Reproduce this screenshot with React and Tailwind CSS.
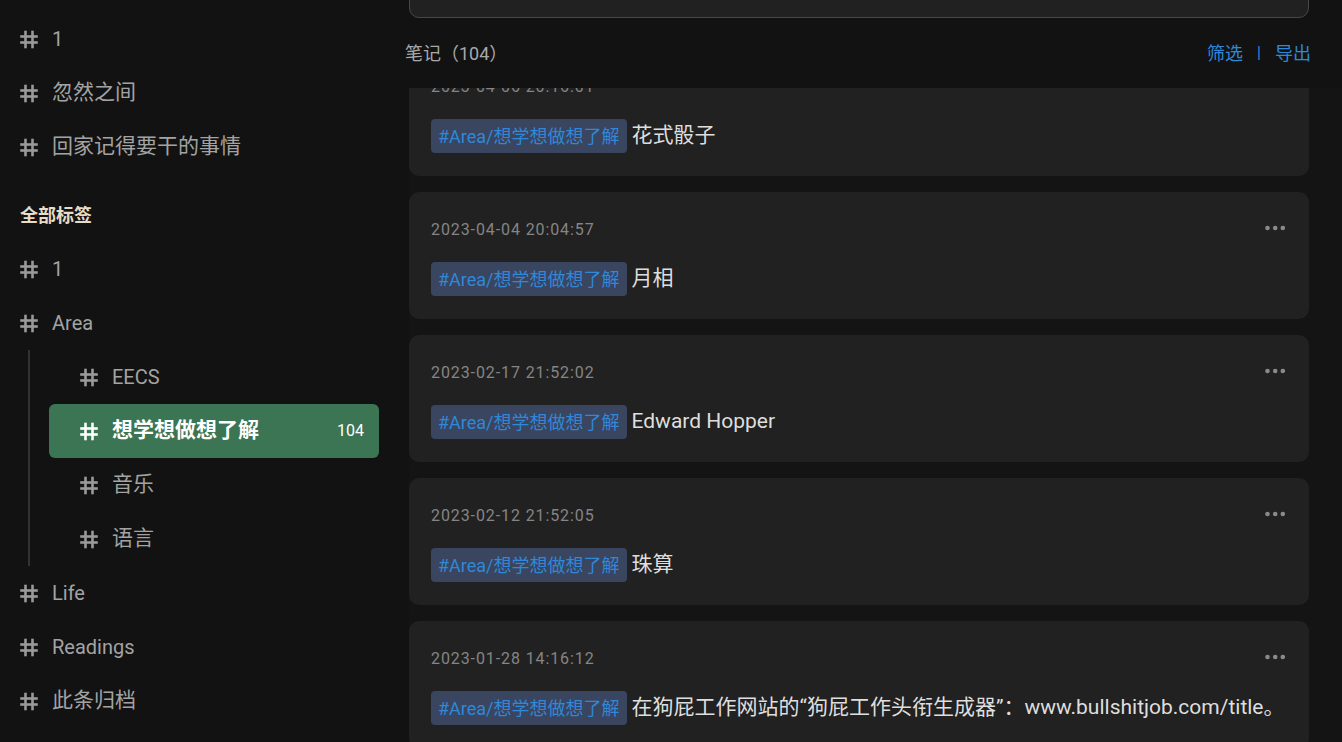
import React from 'react';

const FONT = { fontFamily: 'Roboto, "Noto Sans CJK SC", sans-serif' };

const hasCJK = (s) => /[\u4e00-\u9fff]/.test(s);

const Hash = ({ className = 'text-[#9a9a9a]' }) => (
    <svg width="18" height="19" viewBox="0 0 18 19" className={className}>
        <g stroke="currentColor" strokeWidth="2.6" strokeLinecap="square">
            <line x1="5.5" y1="2" x2="5.5" y2="17" />
            <line x1="12.5" y1="2" x2="12.5" y2="17" />
            <line x1="1.5" y1="6.5" x2="16.5" y2="6.5" />
            <line x1="1.5" y1="12.5" x2="16.5" y2="12.5" />
        </g>
    </svg>
);

const TagRow = ({ label }) => (
    <div className="flex h-[54px] items-center gap-[14px]">
        <Hash />
        <span className={`${hasCJK(label) ? 'text-[21px]' : 'text-[20px]'} text-[#a3a3a3]`}>{label}</span>
    </div>
);

const SubRow = ({ label, active, count }) => (
    <div
        className={`ml-[19px] flex h-[54px] items-center rounded-[6px] pl-[31px] pr-[15px] ${
            active ? 'bg-[#3b7553]' : ''
        }`}
    >
        <Hash className={active ? 'text-white' : 'text-[#9a9a9a]'} />
        <span
            className={`ml-[14px] flex-1 ${hasCJK(label) ? 'text-[21px]' : 'text-[20px]'} ${
                active ? 'font-bold text-white' : 'text-[#a3a3a3]'
            }`}
        >
            {label}
        </span>
        {count && <span className="text-[16px] text-white">{count}</span>}
    </div>
);

const notes = [
    { time: '2023-04-06 20:16:01', text: '花式骰子' },
    { time: '2023-04-04 20:04:57', text: '月相' },
    { time: '2023-02-17 21:52:02', text: 'Edward Hopper' },
    { time: '2023-02-12 21:52:05', text: '珠算' },
    { time: '2023-01-28 14:16:12', text: '在狗屁工作网站的“狗屁工作头衔生成器”：www.bullshitjob.com/title。' },
];

const Dots = () => (
    <svg width="20" height="6" viewBox="0 0 20 6" className="mt-[7px] text-[#8a8a8a]">
        <circle cx="2.5" cy="3" r="2.3" fill="currentColor" />
        <circle cx="10.2" cy="3" r="2.3" fill="currentColor" />
        <circle cx="17.8" cy="3" r="2.3" fill="currentColor" />
    </svg>
);

const NoteCard = ({ note, first }) => (
    <div
        className={`h-[127px] shrink-0 rounded-[10px] bg-[#212121] pl-[22px] pr-[24px] pt-[26px] ${
            first ? '-mt-[39px]' : ''
        }`}
    >
        <div className="flex h-[24px] items-start justify-between">
            <span className="text-[16px] leading-[24px] tracking-[0.9px] text-[#858585]">{note.time}</span>
            <Dots />
        </div>
        <div className="mt-[20px] flex items-center gap-[5px]">
            <span className="flex h-[34px] items-center rounded-[4px] bg-[#3a4560] px-[7px] text-[18px] text-[#2f88d8]">
                #Area/想学想做想了解
            </span>
            <span className="whitespace-nowrap text-[21px] text-[#dedede]">{note.text}</span>
        </div>
    </div>
);

const App = () => {
    return (
        <div className="flex h-[742px] w-full overflow-hidden bg-[#121212]" style={FONT}>
            <aside className="w-[395px] shrink-0 pl-[20px] pt-[12px]">
                <TagRow label="1" />
                <TagRow label="忽然之间" />
                <TagRow label="回家记得要干的事情" />
                <div className="flex h-[68px] items-end pb-[14px]">
                    <span className="text-[18px] font-bold leading-[24px] text-[#e6dcc7]">全部标签</span>
                </div>
                <TagRow label="1" />
                <TagRow label="Area" />
                <div className="ml-[8px] mr-[16px] border-l-2 border-[#333333]">
                    <SubRow label="EECS" />
                    <SubRow label="想学想做想了解" active count="104" />
                    <SubRow label="音乐" />
                    <SubRow label="语言" />
                </div>
                <TagRow label="Life" />
                <TagRow label="Readings" />
                <TagRow label="此条归档" />
            </aside>

            <main className="flex min-w-0 flex-1 flex-col">
                <div className="h-[88px] shrink-0">
                    <div className="-mt-[40px] ml-[14px] mr-[33px] flex h-[58px] items-end justify-end rounded-[10px] border border-[#474747] bg-[#212121] pb-[17px] pr-[29px]">
                        <div className="h-[32px] w-[54px] rounded-[4px] bg-[#3b7553]" />
                    </div>
                    <div className="mt-[23px] flex h-[24px] items-center justify-between pl-[10px] pr-[31px]">
                        <span className="text-[18px] text-[#a8a8a8]">笔记（104）</span>
                        <span className="flex items-center gap-[14px] text-[18px] text-[#2f88d8]">
                            <span>筛选</span>
                            <span className="text-[16px]">|</span>
                            <span>导出</span>
                        </span>
                    </div>
                </div>
                <div className="ml-[14px] flex flex-1 flex-col gap-[16px] overflow-hidden bg-[#141414] pr-[33px]">
                    {notes.map((n, i) => (
                        <NoteCard key={n.time} note={n} first={i === 0} />
                    ))}
                </div>
            </main>
        </div>
    );
};

export default App;
